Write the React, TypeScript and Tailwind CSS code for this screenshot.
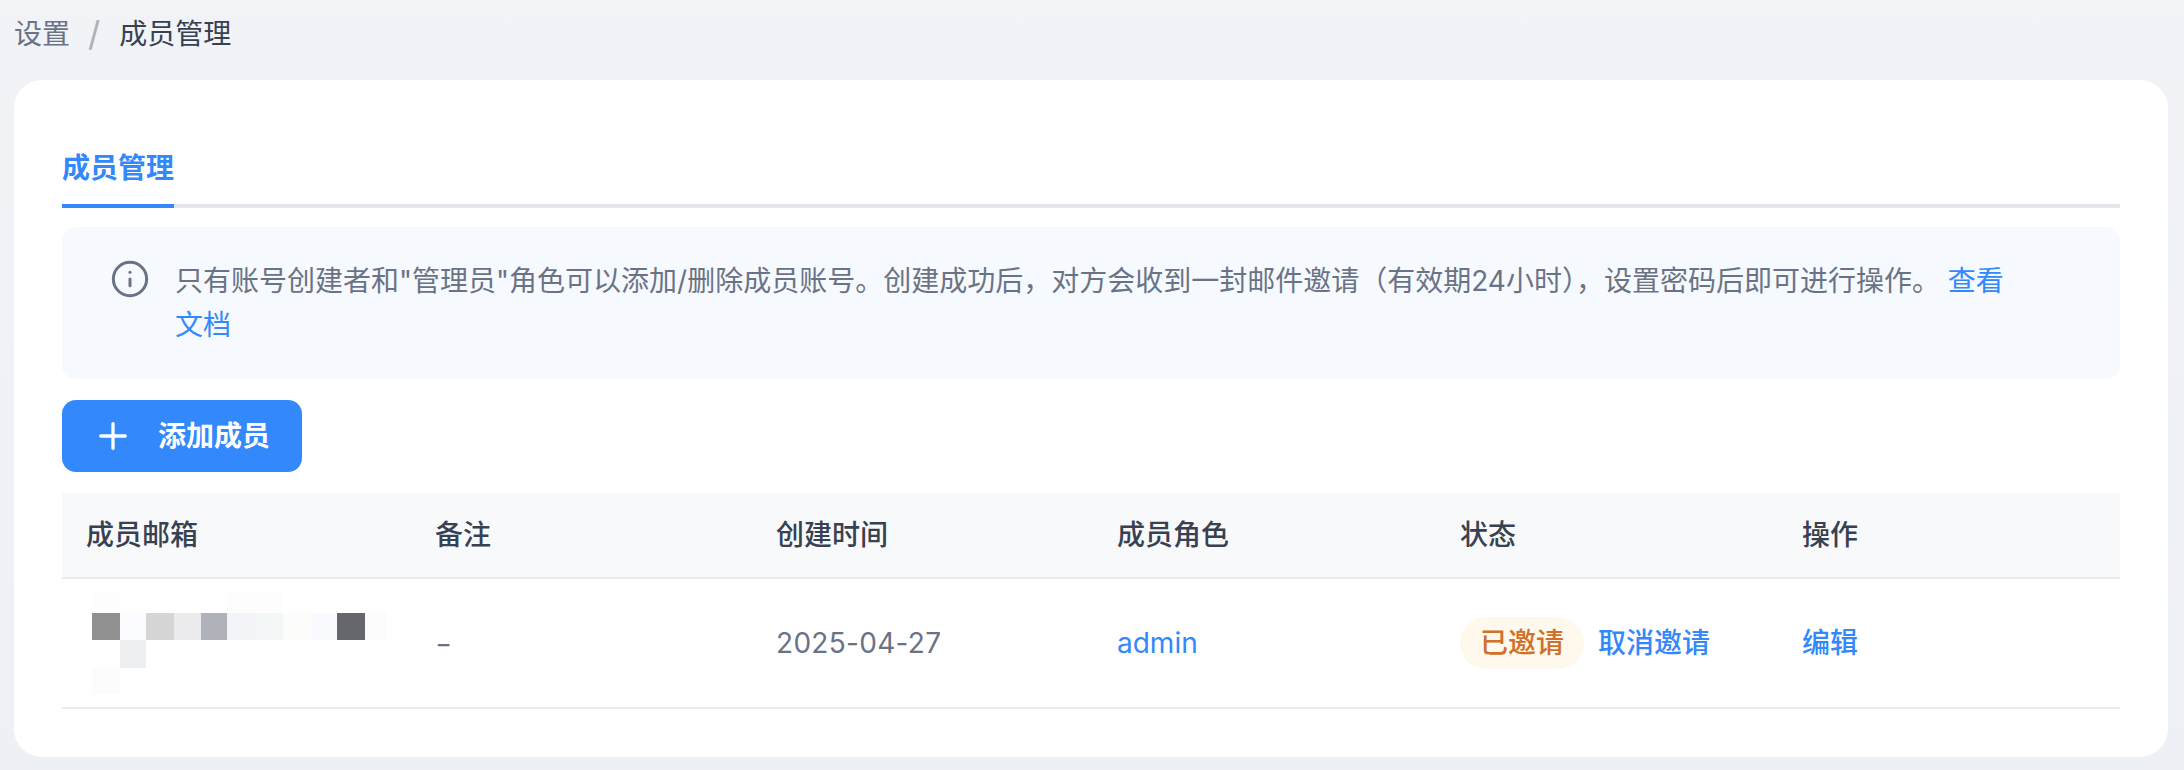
import { Info, Plus } from "lucide-react";

const columns = ["成员邮箱", "备注", "创建时间", "成员角色", "状态", "操作"];
const grid = "grid grid-cols-[349px_341px_341px_343px_342px_342px]";

// mosaic over the e-mail address: x, y, width, height, colour
const mosaic: [number, number, number, number, string][] = [
  [0, 0, 28, 21, "#fdfdfd"],
  [135, 0, 55, 21, "#fdfdfd"],
  [0, 21, 28, 27, "#909090"],
  [28, 21, 26, 27, "#fbfcff"],
  [54, 21, 28, 27, "#d6d6d6"],
  [82, 21, 27, 27, "#ebebee"],
  [109, 21, 26, 27, "#b0b2b9"],
  [135, 21, 29, 27, "#f3f4f8"],
  [164, 21, 27, 27, "#f4f7f8"],
  [191, 21, 27, 27, "#fcfcfb"],
  [218, 21, 27, 27, "#fafbff"],
  [245, 21, 28, 27, "#66676c"],
  [273, 21, 22, 27, "#fcfcfc"],
  [28, 48, 26, 28, "#eeeff1"],
  [0, 76, 28, 26, "#fcfcfc"],
];

export default function App() {
  return (
    <div className="w-[2184px] h-[770px] overflow-hidden bg-[linear-gradient(180deg,#f1f3f7_0%,#edf0f5_100%)] font-['Inter','Noto_Sans_CJK_SC',sans-serif] text-[28px]">
      <div className="h-[80px] pl-[14px] pt-[14px] flex items-start text-[#6a7386] leading-[40px]">
        <span>设置</span>
        <span className="ml-[18px] mr-[19px] text-[34px] text-[#aeb0b4]">/</span>
        <span className="text-[#374151]">成员管理</span>
      </div>

      <div className="ml-[14px] mr-[16px] h-[677px] rounded-[28px] bg-white pt-[64px] px-[48px]">
        <div className="h-[64px] border-b-4 border-[#e4e6ee]">
          <div className="w-[112px] h-[64px] border-b-4 border-[#3388fb] text-[#3388fb] font-semibold leading-[40px] pt-[4px] whitespace-nowrap box-border">
            成员管理
          </div>
        </div>

        <div className="mt-[19px] h-[152px] rounded-[14px] bg-[#f6f9fd] flex pl-[48px] pr-[98px] pt-[32px] text-[#6a7386] leading-[44px]">
          <Info className="w-[40px] h-[40px] shrink-0" strokeWidth={1.8} />
          <p className="ml-[25px]">
            只有账号创建者和"管理员"角色可以添加/删除成员账号。创建成功后，对方会收到一封邮件邀请（有效期24小时），设置密码后即可进行操作。{" "}
            <a className="text-[#3388fb]">查看文档</a>
          </p>
        </div>

        <button className="mt-[21px] w-[240px] h-[72px] rounded-[14px] bg-[#3388fb] text-white font-semibold flex items-center pl-[30px]">
          <Plus className="w-[42px] h-[42px]" strokeWidth={1.9} />
          <span className="ml-[24px]">添加成员</span>
        </button>

        <div className={`${grid} mt-[21px] h-[86px] bg-[#f8f9fb] border-b-2 border-[#e9ebf0] items-center text-[#374151] font-medium`}>
          {columns.map((c) => (
            <div key={c} className="pl-[24px]">
              {c}
            </div>
          ))}
        </div>

        <div className={`${grid} h-[130px] border-b-2 border-[#e9ebf0] items-center text-[#6a7386]`}>
          <div className="pl-[30px]">
            <svg width="295" height="102" viewBox="0 0 295 102" className="block">
              {mosaic.map(([x, y, w, h, fill], i) => (
                <rect key={i} x={x} y={y} width={w} height={h} fill={fill} />
              ))}
            </svg>
          </div>
          <div className="pl-[24px] text-[38px] leading-[40px] font-light">-</div>
          <div className="pl-[24px] tracking-[0.3px]">2025-04-27</div>
          <div className="pl-[24px] text-[#3388fb]">admin</div>
          <div className="pl-[24px] flex items-center">
            <span className="h-[52px] px-[20px] rounded-[26px] bg-[#fff8ec] text-[#d0702a] font-medium leading-[52px]">
              已邀请
            </span>
            <a className="ml-[14px] text-[#3388fb] font-medium whitespace-nowrap">取消邀请</a>
          </div>
          <div className="pl-[24px]">
            <a className="text-[#3388fb] font-medium">编辑</a>
          </div>
        </div>
      </div>
    </div>
  );
}
